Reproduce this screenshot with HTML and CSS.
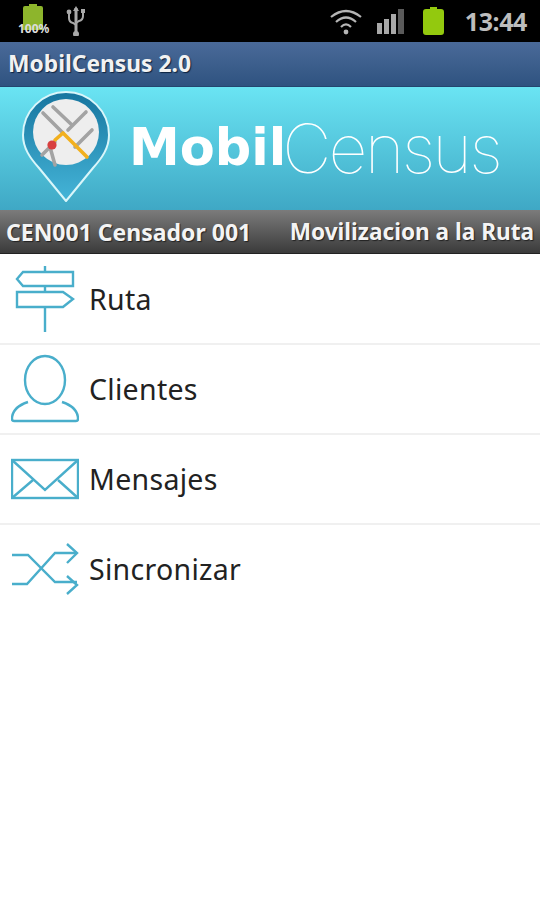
FILE: index.html
```html
<!DOCTYPE html>
<html lang="es">
<head>
    <meta charset="UTF-8">
    <meta name="viewport" content="width=device-width, initial-scale=1.0">
    <title>MobilCensus 2.0</title>
    <link rel="stylesheet" href="styles.css">
</head>

<body>
    <!-- Barra de estado -->
    <div class="status-bar">
        <div class="status-left">
            <div class="charge">
                <svg class="charge-icon" width="20" height="26" viewBox="0 0 20 26">
                    <path d="M6 0H14V2H18Q20 2 20 4V26H0V4Q0 2 2 2H6Z" fill="#8db52c"/>
                </svg>
                <span class="charge-text">100%</span>
            </div>
            <svg width="20" height="30" viewBox="0 0 20 30" fill="none" stroke="#a9a9a9">
                <path d="M10 2V28" stroke-width="3"/>
                <path d="M7 5L10 0L13 5Z" fill="#a9a9a9" stroke="none"/>
                <path d="M3 7V12Q3 16 7 17L10 19" stroke-width="2"/>
                <path d="M17 6V10Q17 14 13 15L10 17" stroke-width="2"/>
                <circle cx="3" cy="6" r="2.4" fill="#a9a9a9" stroke="none"/>
                <rect x="15" y="3" width="4" height="4" fill="#a9a9a9" stroke="none"/>
                <circle cx="10" cy="28" r="3" fill="#a9a9a9" stroke="none"/>
            </svg>
        </div>
        <div class="status-right">
            <svg width="32" height="27" viewBox="0 0 32 27" fill="none" stroke="#b5b5b5" stroke-width="2.2">
                <path d="M1 9Q16 -3 31 9"/>
                <path d="M6 14Q16 5 26 14"/>
                <path d="M11 19Q16 14 21 19"/>
                <circle cx="16" cy="24" r="2.4" fill="#b5b5b5" stroke="none"/>
            </svg>
            <svg class="signal" width="27" height="25" viewBox="0 0 27 25">
                <rect x="0" y="14" width="5" height="11" fill="#a8a8a8"/>
                <rect x="7" y="10" width="5" height="15" fill="#a8a8a8"/>
                <rect x="14" y="5" width="5" height="20" fill="#a8a8a8"/>
                <rect x="21" y="0" width="6" height="25" fill="#5a5a5a"/>
            </svg>
            <svg class="battery" width="21" height="28" viewBox="0 0 21 28">
                <path d="M7 0H14V2H18Q21 2 21 5V25Q21 28 18 28H3Q0 28 0 25V5Q0 2 3 2H7Z" fill="#93c90e"/>
            </svg>
            <span class="clock">13:44</span>
        </div>
    </div>

    <div class="title-bar">MobilCensus 2.0</div>

    <!-- Logo -->
    <div class="banner">
        <svg class="pin" width="90" height="115" viewBox="0 0 90 115">
            <defs>
                <linearGradient id="pinFill" x1="0" y1="0" x2="0" y2="1">
                    <stop offset="0" stop-color="#17759f"/>
                    <stop offset="1" stop-color="#45b5d8"/>
                </linearGradient>
            </defs>
            <path d="M44 111L17 78C8 68 1 58 1 45A43 43 0 1 1 87 45C87 58 80 68 71 78Z" fill="url(#pinFill)" stroke="#d9f6fa" stroke-width="2" stroke-linejoin="round"/>
            <circle cx="44" cy="42" r="33" fill="#eeeeee"/>
            <g stroke="#a3a3a3" stroke-width="3.6" stroke-linecap="round" fill="none">
                <path d="M21 23L41 43"/>
                <path d="M31 17L50 35"/>
                <path d="M64 22L46 40"/>
                <path d="M70 40L53 57"/>
                <path d="M20 65L33 52"/>
                <path d="M28 57L33 75"/>
            </g>
            <path d="M33 50L41 43L65 67" fill="none" stroke="#f2b01e" stroke-width="3.6" stroke-linecap="round" stroke-linejoin="round"/>
            <circle cx="30" cy="55" r="4.6" fill="#d8403f"/>
        </svg>
        <div class="brand">
            <span class="brand-bold">Mobil</span><span class="brand-thin">Census</span>
        </div>
    </div>

    <div class="user-bar">
        <span>CEN001 Censador 001</span>
        <span class="user-state">Movilizacion a la Ruta</span>
    </div>

    <!-- Menu principal -->
    <div class="menu">
        <div class="menu-item">
            <svg class="menu-icon" width="68" height="90" viewBox="0 0 68 90">
                <path d="M6 25L12 18H62V32H12Z"/>
                <path d="M6 38H52L62 45L52 53H6Z"/>
                <path d="M34 12V18M34 32V38M34 53V78"/>
            </svg>
            <span>Ruta</span>
        </div>
        <div class="menu-item">
            <svg class="menu-icon" width="68" height="90" viewBox="0 0 68 90">
                <ellipse cx="34" cy="36" rx="20" ry="24"/>
                <path d="M17 58C8 61 1 66 1 75Q1 77 3 77H65Q67 77 67 75C67 66 60 61 51 58"/>
            </svg>
            <span>Clientes</span>
        </div>
        <div class="menu-item">
            <svg class="menu-icon" width="68" height="90" viewBox="0 0 68 90">
                <rect x="1" y="26" width="66" height="38"/>
                <path d="M1 26L34 56L67 26"/>
                <path d="M1 64L22 46M67 64L47 46"/>
            </svg>
            <span>Mensajes</span>
        </div>
        <div class="menu-item">
            <svg class="menu-icon" width="68" height="90" viewBox="0 0 68 90">
                <path d="M1 31H17L44 58H66"/>
                <path d="M1 60H16L44 29H66"/>
                <path d="M56 20L66 29L56 39"/>
                <path d="M56 52L66 61L56 70"/>
            </svg>
            <span>Sincronizar</span>
        </div>
    </div>
</body>
</html>
```

FILE: styles.css
```css
body {
    font-family: "Noto Sans", "Open Sans", sans-serif;
    margin: 0;
    padding: 0;
    background-color: #fff;
    color: #222;
}

.status-bar {
    height: 42px;
    background-color: #000;
    display: flex;
    justify-content: space-between;
    align-items: center;
    padding: 0 13px 0 23px;
    box-sizing: border-box;
}

.status-left {
    display: flex;
    align-items: center;
    gap: 23px;
}

.status-right {
    display: flex;
    align-items: center;
}

.charge {
    position: relative;
    width: 20px;
    height: 26px;
    margin-bottom: 8px;
}

.charge-icon {
    display: block;
}

.charge-text {
    position: absolute;
    left: -5px;
    top: 18px;
    font-size: 12px;
    font-weight: 700;
    line-height: 13px;
    color: #ddd;
}

.signal {
    margin-left: 15px;
}

.battery {
    margin-left: 19px;
}

.clock {
    margin-left: 21px;
    font-size: 25px;
    font-weight: 700;
    letter-spacing: -0.4px;
    color: #bdbdbd;
}

.title-bar {
    height: 45px;
    line-height: 44px;
    padding-left: 8px;
    box-sizing: border-box;
    background: linear-gradient(#4a6a99, #2f5380);
    border-bottom: 1px solid #24466f;
    color: #f2f2f2;
    font-size: 22.8px;
    font-weight: 700;
    text-shadow: 1px 1px 1px #0d2340;
}

.banner {
    height: 123px;
    box-sizing: border-box;
    padding-top: 3px;
    padding-left: 22px;
    background: linear-gradient(#6ae4f3, #3fa8c5);
    display: flex;
    align-items: flex-start;
}

.pin {
    flex-shrink: 0;
}

.brand {
    margin-left: 17px;
    height: 115px;
    display: flex;
    align-items: center;
    color: #fff;
    white-space: nowrap;
}

.brand-bold {
    font-family: "DejaVu Sans", sans-serif;
    font-size: 51px;
    font-weight: 700;
    line-height: 60px;
}

.brand-thin {
    font-family: "Inter", sans-serif;
    font-size: 68px;
    font-weight: 100;
    letter-spacing: -2.8px;
    line-height: 60px;
    margin-left: -4px;
}

.user-bar {
    height: 44px;
    box-sizing: border-box;
    padding: 0 6px 0 6px;
    background: linear-gradient(#7b7b7b, #3b3b3b);
    border-bottom: 1px solid #222;
    display: flex;
    justify-content: space-between;
    align-items: center;
    color: #f4f4f4;
    font-size: 23px;
    font-weight: 700;
    text-shadow: 1px 1px 1px #222;
}

.user-state {
    font-size: 22.6px;
}

.menu {
    margin-top: 1px;
}

.menu-item {
    height: 90px;
    box-sizing: border-box;
    border-bottom: 2px solid #f0f0f0;
    padding-left: 11px;
    display: flex;
    align-items: center;
    gap: 10px;
    font-size: 28.5px;
    letter-spacing: 0.3px;
}

.menu-item:last-child {
    border-bottom-color: transparent;
}

.menu-icon {
    flex-shrink: 0;
    fill: none;
    stroke: #49aecb;
    stroke-width: 2.4;
}
```
